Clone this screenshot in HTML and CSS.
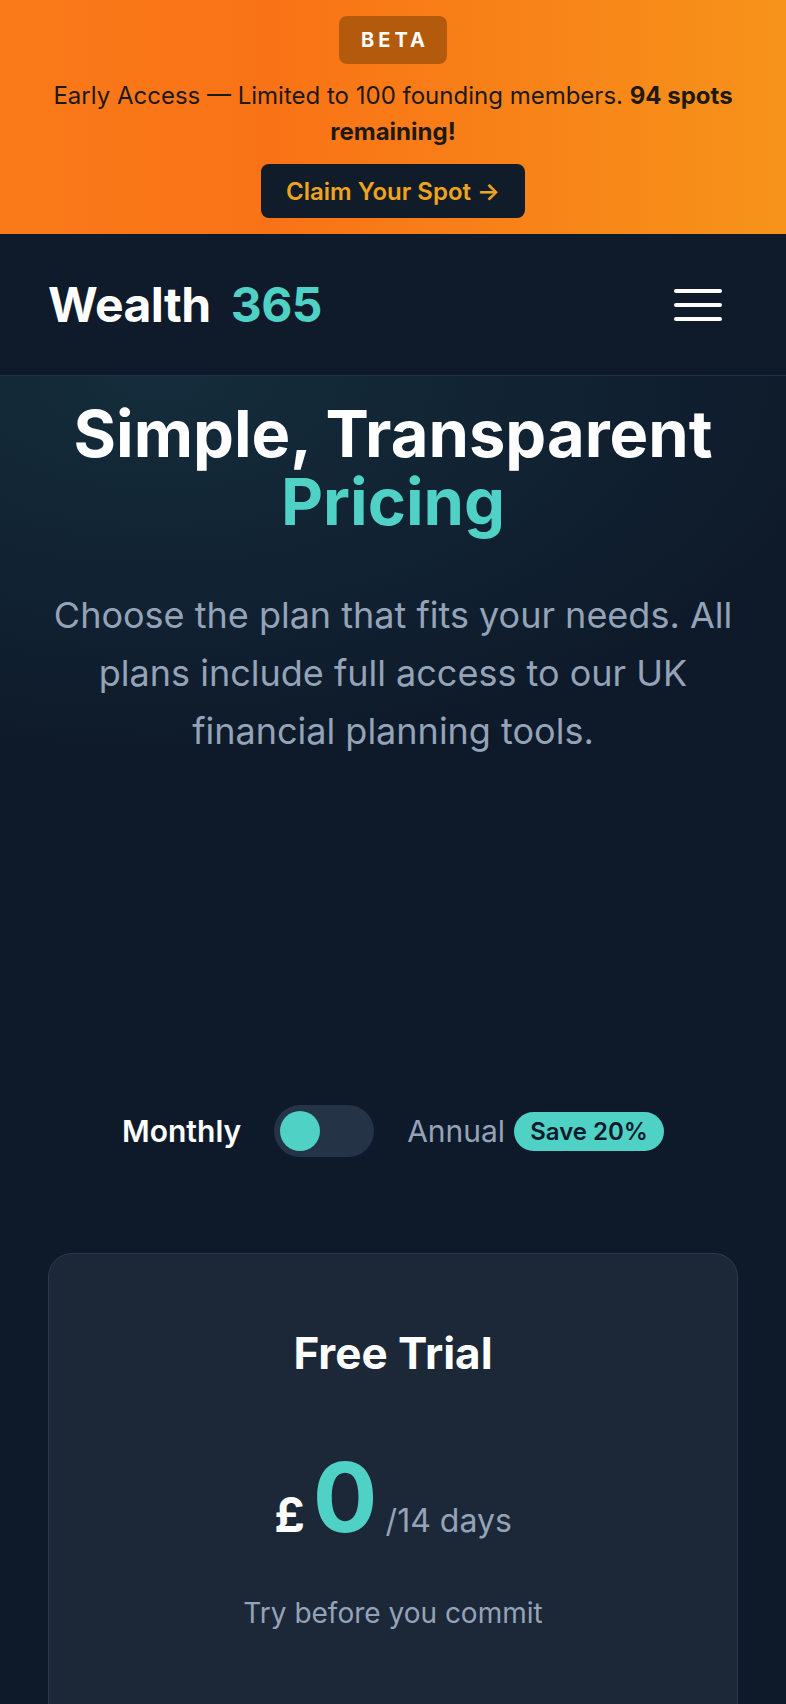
FILE: index.html
```html
<!DOCTYPE html>
<html lang="en">
<head>
<meta charset="utf-8">
<title>Wealth 365 — Pricing</title>
<link rel="stylesheet" href="styles.css">
</head>
<body>
<div class="beta-bar">
  <span class="beta-badge">BETA</span>
  <p class="beta-text">Early Access — Limited to 100 founding members. <strong>94 spots remaining!</strong></p>
  <a class="beta-cta" href="#">Claim Your Spot →</a>
</div>
<header class="nav">
  <a class="logo" href="#"><span class="logo-word">Wealth</span><span class="logo-num">365</span></a>
  <button class="menu-btn" aria-label="Menu">
    <span class="menu-line"></span>
    <span class="menu-line"></span>
    <span class="menu-line"></span>
  </button>
</header>
<main class="page">
  <section class="hero">
    <h1 class="hero-title">Simple, Transparent <span class="accent">Pricing</span></h1>
    <p class="hero-sub">Choose the plan that fits your needs. All plans include full access to our UK financial planning tools.</p>
  </section>
  <section class="pricing">
    <div class="billing-toggle">
      <span class="bill-label active">Monthly</span>
      <span class="switch"><span class="knob"></span></span>
      <span class="bill-label">Annual<span class="save-badge">Save 20%</span></span>
    </div>
    <div class="card">
      <h2 class="plan-name">Free Trial</h2>
      <div class="price">
        <span class="currency">£</span>
        <span class="amount">0</span>
        <span class="period">/14 days</span>
      </div>
      <p class="plan-desc">Try before you commit</p>
    </div>
  </section>
</main>
</body>
</html>
```
FILE: styles.css
```css
* { box-sizing: border-box; }
html, body { margin: 0; padding: 0; }
body {
  background: #0e1a2a;
  font-family: Inter, "Noto Sans", "Liberation Sans", sans-serif;
  color: #ffffff;
}
.beta-bar {
  background: linear-gradient(90deg, #fa7a1a 0%, #f97316 35%, #f7931a 100%);
  padding: 16px 40px;
  display: flex;
  flex-direction: column;
  align-items: center;
  gap: 14px;
  text-align: center;
}
.beta-badge {
  display: inline-flex;
  align-items: center;
  justify-content: center;
  height: 48px;
  padding: 0 18px 0 22px;
  background: #b45a0c;
  border-radius: 8px;
  color: #fff;
  font-weight: 700;
  font-size: 20px;
  letter-spacing: 4px;
}
.beta-text {
  margin: 0;
  font-size: 24px;
  line-height: 36px;
  color: #1c1917;
}
.beta-text strong { font-weight: 700; }
.beta-cta {
  display: inline-flex;
  align-items: center;
  height: 54px;
  padding: 0 25px;
  background: #111c2b;
  border-radius: 8px;
  color: #f0a41c;
  font-weight: 600;
  font-size: 24px;
  text-decoration: none;
}
.nav {
  height: 142px;
  background: #0f1b2a;
  border-bottom: 1px solid #1b3340;
  display: flex;
  align-items: center;
  justify-content: space-between;
  padding: 0 64px 0 48px;
}
.logo {
  display: flex;
  gap: 20px;
  font-size: 48px;
  font-weight: 700;
  text-decoration: none;
  letter-spacing: -0.5px;
}
.logo-word { color: #ffffff; }
.logo-num { color: #4fd1c5; }
.menu-btn {
  background: none;
  border: 0;
  padding: 0;
  width: 48px;
  display: flex;
  flex-direction: column;
  gap: 10px;
}
.menu-line {
  display: block;
  height: 4px;
  width: 48px;
  background: #fff;
  border-radius: 2px;
}
.page {
  background:
    radial-gradient(ellipse 700px 380px at 20% 0%, rgba(64, 170, 180, 0.13), rgba(64, 170, 180, 0) 100%),
    #0e1a2a;
}
.hero {
  padding: 24px 40px 0;
  text-align: center;
}
.hero-title {
  margin: 0;
  font-size: 65px;
  line-height: 68px;
  font-weight: 700;
  color: #fff;
}
.accent { color: #4fd1c5; }
.hero-sub {
  margin: 50px 0 0;
  font-size: 36px;
  line-height: 58px;
  color: #94a3b8;
}
.pricing {
  padding: 345px 48px 0;
}
.billing-toggle {
  display: flex;
  align-items: center;
  justify-content: center;
  gap: 33px;
  height: 52px;
}
.bill-label {
  font-size: 30px;
  color: #94a3b8;
  display: inline-flex;
  align-items: center;
}
.bill-label.active {
  color: #fff;
  font-weight: 600;
}
.switch {
  width: 100px;
  height: 52px;
  border-radius: 26px;
  background: #243346;
  display: flex;
  align-items: center;
  padding: 0 6px;
}
.knob {
  width: 40px;
  height: 40px;
  border-radius: 50%;
  background: #4fd1c5;
}
.save-badge {
  margin-left: 9px;
  height: 39px;
  padding: 0 16px;
  border-radius: 20px;
  background: #4fd1c5;
  color: #0f1b2a;
  font-size: 24px;
  font-weight: 600;
  display: inline-flex;
  align-items: center;
}
.card {
  margin-top: 96px;
  background: #1c2838;
  border: 1px solid #2b3a4b;
  border-radius: 24px;
  padding: 75px 40px 240px;
  text-align: center;
}
.plan-name {
  margin: 0;
  font-size: 44px;
  line-height: 48px;
  font-weight: 700;
}
.price {
  margin-top: 72px;
  display: flex;
  justify-content: center;
  align-items: baseline;
  gap: 8px;
}
.currency {
  font-size: 48px;
  font-weight: 700;
  line-height: 1;
}
.amount {
  font-size: 96px;
  font-weight: 700;
  line-height: 1;
  color: #4fd1c5;
}
.period {
  font-size: 32px;
  color: #94a3b8;
  line-height: 1;
}
.plan-desc {
  margin: 47px 0 0;
  font-size: 28px;
  line-height: 42px;
  color: #94a3b8;
}
```
